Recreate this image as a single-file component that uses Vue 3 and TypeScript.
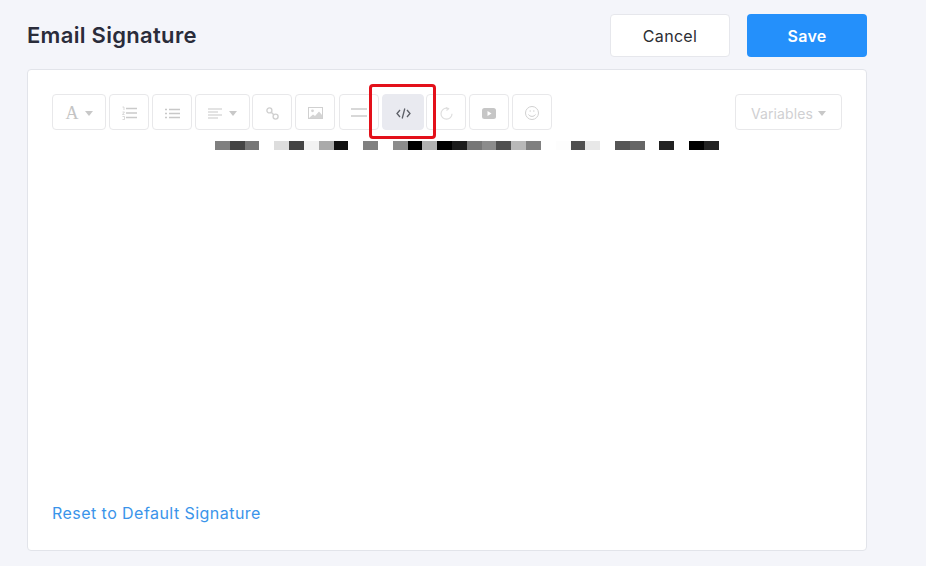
<script setup lang="ts">
const cells: string[] = [
  '#7f7f7f','#444444','#777777','#ffffff','#dddddd','#444444','#f2f2f2','#aaaaaa','#111111','#ffffff',
  '#808080','#ffffff','#8c8c8c','#000000','#b0b0b0','#000000','#1c1c1c','#777777','#8c8c8c','#505050',
  '#b8b8b8','#808080','#ffffff','#fdfdfd','#505050','#e8e8e8','#ffffff','#555555','#666666','#ffffff',
  '#222222','#ffffff','#000000','#222222'
]
</script>

<template>
  <div class="page">
    <header class="head">
      <h1 class="title">Email Signature</h1>
      <div class="actions">
        <button class="btn cancel" type="button">Cancel</button>
        <button class="btn save" type="button">Save</button>
      </div>
    </header>
    <section class="card">
      <div class="toolbar">
        <div class="tools">
          <span class="tool w54">
            <span class="serif-a">A</span><i class="caret"></i>
          </span>
          <span class="tool">
            <svg width="15" height="14" viewBox="0 0 15 14" fill="none" stroke="#cacaca">
              <path d="M4 2.500h11M4 7h11M4 11.500h11" stroke-width="1.500"/>
              <path d="M.5 1h1.500v3M.5 6h2L.5 8.500h2M.5 10.500h2v3H.5" stroke-width=".7"/>
            </svg>
          </span>
          <span class="tool">
            <svg width="15" height="11" viewBox="0 0 15 11" fill="none" stroke="#c8c8c8" stroke-width="1.500">
              <path d="M4 1.500h11M4 5.500h11M4 9.500h11M0 1.500h2M0 5.500h2M0 9.500h2"/>
            </svg>
          </span>
          <span class="tool w55">
            <svg width="15" height="11" viewBox="0 0 15 11" fill="none" stroke="#c8c8c8" stroke-width="1.200">
              <path d="M0 1h14M0 4h10M0 7h14M0 10h10"/>
            </svg>
            <i class="caret"></i>
          </span>
          <span class="tool">
            <svg width="13" height="13" viewBox="0 0 13 13" fill="none" stroke="#d0d0d0" stroke-width="1.400">
              <circle cx="3.400" cy="3.400" r="2.500"/>
              <circle cx="9.600" cy="9.600" r="2.500"/>
              <path d="M5 5l3 3"/>
            </svg>
          </span>
          <span class="tool">
            <svg width="15" height="12" viewBox="0 0 15 12">
              <rect x=".5" y=".5" width="14" height="11" fill="none" stroke="#d0d0d0"/>
              <circle cx="4.500" cy="3.800" r="1.400" fill="#d4d4d4"/>
              <path d="M1 11l4-3.500 2 1.500 4-4.500 3 3.500v3z" fill="#d4d4d4"/>
            </svg>
          </span>
          <span class="tool hr">
            <svg width="16" height="10" viewBox="0 0 16 10" fill="none" stroke="#d8d8d8" stroke-width="1.800">
              <path d="M0 1h16M0 8h16"/>
            </svg>
          </span>
          <span class="tool active">
            <svg width="15" height="11" viewBox="0 0 15 11" fill="none" stroke="#5c5f66" stroke-width="1.300">
              <path d="M4 2L1 5.500 4 9M11 2l3 3.500L11 9M8.800 .5l-2.600 10"/>
            </svg>
          </span>
          <span class="tool">
            <svg width="13" height="13" viewBox="0 0 13 13" fill="none" stroke="#dedede" stroke-width="1.200">
              <circle cx="6.500" cy="6.700" r="5.500" stroke-dasharray="28 6"/>
              <path d="M6 .5l2 1.500-1.500 1.500"/>
            </svg>
          </span>
          <span class="tool">
            <svg width="14" height="11" viewBox="0 0 14 11">
              <rect width="14" height="11" rx="2.500" fill="#c6c6c6"/>
              <path d="M5.500 3l4 2.500-4 2.500z" fill="#fff"/>
            </svg>
          </span>
          <span class="tool">
            <svg width="14" height="14" viewBox="0 0 14 14" fill="none" stroke="#d0d0d0">
              <circle cx="7" cy="7" r="6.500"/>
              <path d="M3.500 8.500c1.500 2.500 5.500 2.500 7 0"/>
              <path d="M4.500 5h1.500M8 5h1.500"/>
            </svg>
          </span>
        </div>
        <span class="tool variables">Variables<i class="caret"></i></span>
        <span class="highlight"></span>
      </div>
      <div class="redacted">
        <span v-for="(c, i) in cells" :key="i" :style="{ background: c }"></span>
      </div>
      <a class="reset" href="#" @click.prevent>Reset to Default Signature</a>
    </section>
  </div>
</template>

<style>
html, body { background: #f4f5fa; }
</style>

<style scoped>
.page {
  box-sizing: border-box;
  width: 926px;
  height: 566px;
  padding: 14px 59px 0 27px;
  font-family: Inter, "Noto Sans", sans-serif;
  overflow: hidden;
}
.head {
  display: flex;
  align-items: flex-start;
  justify-content: space-between;
  height: 55px;
}
.title {
  margin: 8px 0 0 0;
  font-size: 22px;
  line-height: 27px;
  font-weight: 600;
  letter-spacing: .3px;
  color: #2a2c3a;
}
.actions { display: flex; gap: 17px; }
.btn {
  box-sizing: border-box;
  width: 120px;
  height: 43px;
  border-radius: 4px;
  font-family: inherit;
  font-size: 16px;
  letter-spacing: .3px;
  padding: 0;
}
.cancel {
  background: #fff;
  border: 1px solid #e6e7ec;
  color: #2b2d33;
}
.save {
  background: #2490fb;
  border: 0;
  color: #fff;
  font-weight: 600;
}
.card {
  box-sizing: border-box;
  height: 482px;
  background: #fff;
  border: 1px solid #e2e4ea;
  border-radius: 4px;
  padding: 24px 24px 0;
  display: flex;
  flex-direction: column;
}
.toolbar {
  position: relative;
  display: flex;
  justify-content: space-between;
}
.tools { display: flex; gap: 3px; }
.tool {
  box-sizing: border-box;
  width: 40px;
  height: 36px;
  padding-top: 2px;
  border: 1px solid #e8e8ea;
  border-radius: 4px;
  display: flex;
  align-items: center;
  justify-content: center;
  background: #fff;
}
.w54 { width: 54px; gap: 6px; }
.w55 { width: 55px; gap: 6px; margin-right: -1px; }
.serif-a {
  font-family: "Liberation Serif", serif;
  font-size: 18px;
  line-height: 20px;
  color: #c4c4c4;
}
.caret {
  width: 0;
  height: 0;
  border: 4.500px solid transparent;
  border-top: 5px solid #c8c8c8;
  border-bottom: 0;
}
.hr { margin-left: 1px; }
.active {
  width: 42px;
  background: #e9eaf0;
  border-color: #e9eaf0;
  margin-right: -1px;
}
.variables {
  width: 107px;
  gap: 5px;
  font-size: 14px;
  letter-spacing: .1px;
  color: #d0d0d2;
}
.highlight {
  position: absolute;
  left: 317px;
  top: -10px;
  width: 67px;
  height: 55px;
  box-sizing: border-box;
  border: 3px solid #e3101a;
  border-radius: 4px;
}
.redacted {
  display: grid;
  grid-template-columns: repeat(34, 14.82px);
  height: 9px;
  margin: 11px 0 0 163px;
}
.reset {
  margin-top: auto;
  margin-bottom: 27px;
  font-size: 16px;
  line-height: 20px;
  letter-spacing: .45px;
  color: #3a94ea;
  text-decoration: none;
}
</style>
